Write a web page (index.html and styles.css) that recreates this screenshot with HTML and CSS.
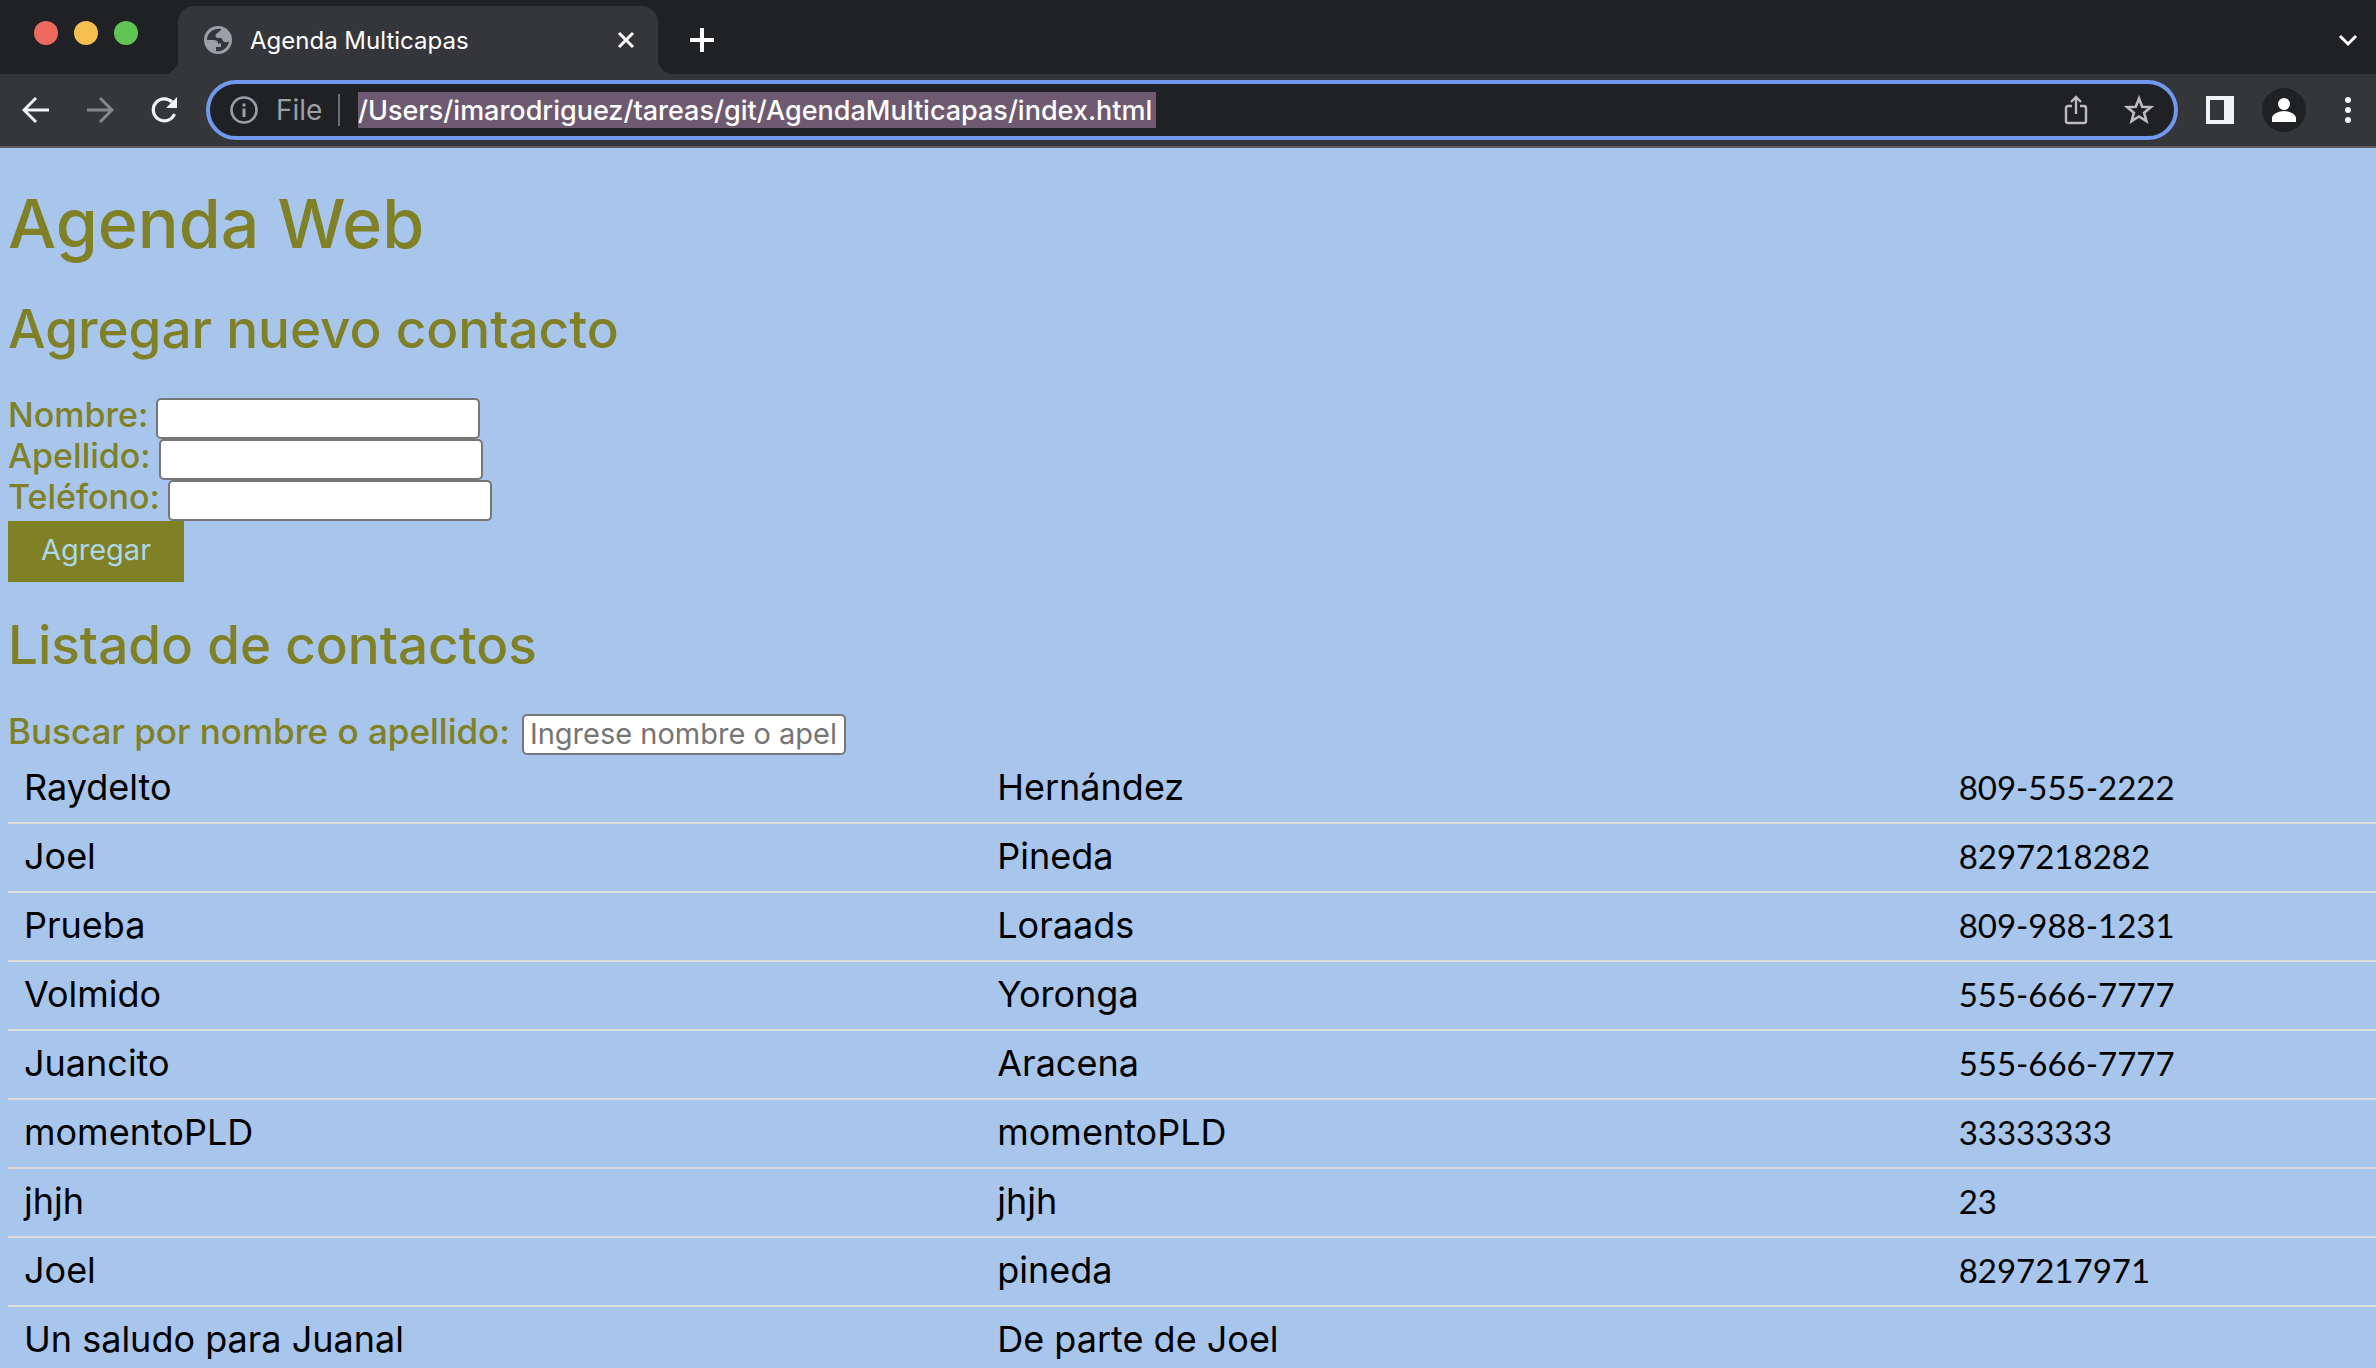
FILE: index.html
```html
<!DOCTYPE html>
<html lang="es">
<head>
<meta charset="utf-8">
<title>Agenda Multicapas</title>
<link rel="stylesheet" href="styles.css">
</head>
<body>
<header class="browser">
  <div class="tabstrip">
    <div class="lights"><span class="light red"></span><span class="light yellow"></span><span class="light green"></span></div>
    <div class="tab">
      <svg class="favicon" viewBox="0 0 28 28" width="28" height="28" aria-hidden="true"><circle cx="14" cy="14" r="14" fill="#9aa0a6"/><path d="M17 3C10 2 3 6.500 3 14h7c2.300 0 4 1.200 4 3.500h3V21h-5v4c6.500 1.200 12-3.500 13-9.500-2 1.300-4.500 1-6-.5-1-1-.5-3-2.500-3-2.500 0-5 0-5-2 0-2.500 2-2.300 2.500-3.500C14.500 5 17 5.500 17 3z" fill="#35363a"/></svg>
      <span class="tab-title">Agenda Multicapas</span>
      <button class="icon" aria-label="Cerrar"><svg viewBox="0 0 18 18" width="18" height="18"><path d="M2 2l14 14M16 2L2 16" stroke="#fff" stroke-width="3" fill="none"/></svg></button>
    </div>
    <button class="icon newtab" aria-label="Nueva pestaña"><svg viewBox="0 0 24 24" width="24" height="24"><path d="M12 1v22M1 12h22" stroke="#fff" stroke-width="4" stroke-linecap="round"/></svg></button>
    <button class="icon tabsearch" aria-label="Buscar pestañas"><svg viewBox="0 0 20 14" width="20" height="14"><path d="M2 3l8 8 8-8" stroke="#fff" stroke-width="3" fill="none"/></svg></button>
  </div>
  <div class="toolbar">
    <nav class="nav">
      <button class="icon" aria-label="Atrás"><svg viewBox="0 0 28 28" width="28" height="28"><path d="M27 14H3M14 2L2 14l12 12" stroke="#f1f3f4" stroke-width="3" fill="none"/></svg></button>
      <button class="icon" aria-label="Adelante"><svg viewBox="0 0 28 28" width="28" height="28"><path d="M1 14h24M14 2l12 12-12 12" stroke="#86878a" stroke-width="3" fill="none"/></svg></button>
      <button class="icon" aria-label="Recargar"><svg viewBox="0 0 28 28" width="28" height="28"><path d="M24.500 18A11 11 0 1 1 22 6" stroke="#f1f3f4" stroke-width="3.200" fill="none"/><path d="M27 1v11H16z" fill="#f1f3f4"/></svg></button>
    </nav>
    <div class="omnibox">
      <svg viewBox="0 0 28 28" width="28" height="28" aria-hidden="true"><circle cx="14" cy="14" r="12.500" fill="none" stroke="#9aa0a6" stroke-width="2.600"/><path d="M14 12.500V21M14 7.500v3" stroke="#9aa0a6" stroke-width="3"/></svg>
      <label class="scheme" for="url">File</label>
      <span class="divider"></span>
      <input class="url" id="url" type="text" value="/Users/imarodriguez/tareas/git/AgendaMulticapas/index.html">
      <div class="omni-actions">
        <button class="icon" aria-label="Compartir"><svg viewBox="0 0 24 30" width="24" height="30"><path d="M8 11H4q-2 0-2 2v13q0 2 2 2h16q2 0 2-2V13q0-2-2-2h-4M12 19V3M7 7l5-5 5 5" fill="none" stroke="#bdbdbe" stroke-width="2.400"/></svg></button>
        <button class="icon" aria-label="Marcador"><svg viewBox="0 0 30 30" width="30" height="30"><path d="M15 3.500l3.200 8.200 8.700.5-6.800 5.500 2.300 8.500L15 21.500l-7.400 4.700 2.300-8.500-6.800-5.500 8.700-.5z" fill="none" stroke="#bdbdbe" stroke-width="2.600"/></svg></button>
      </div>
    </div>
    <button class="icon panel" aria-label="Panel lateral"><svg viewBox="0 0 28 28" width="28" height="28"><path d="M0 0h28v28H0zM4 4v20h14V4z" fill="#f1f3f4" fill-rule="evenodd"/></svg></button>
    <button class="icon avatar" aria-label="Perfil"><svg viewBox="0 0 44 44" width="44" height="44"><circle cx="22" cy="22" r="22" fill="#202124"/><circle cx="22" cy="16" r="6" fill="#fff"/><path d="M10 34v-4c0-4 7-7 12-7s12 3 12 7v4z" fill="#fff"/></svg></button>
    <button class="icon menu" aria-label="Menú"><svg viewBox="0 0 8 28" width="8" height="28"><g fill="#f1f3f4"><circle cx="4" cy="4" r="3"/><circle cx="4" cy="14" r="3"/><circle cx="4" cy="24" r="3"/></g></svg></button>
  </div>
</header>
<main class="page">
  <h1>Agenda Web</h1>
  <h2>Agregar nuevo contacto</h2>
  <form class="form">
    <div class="field"><label for="nombre">Nombre:</label><input id="nombre" type="text"></div>
    <div class="field"><label for="apellido">Apellido:</label><input id="apellido" type="text"></div>
    <div class="field"><label for="telefono">Teléfono:</label><input id="telefono" type="text"></div>
    <button class="add" type="button">Agregar</button>
  </form>
  <h2>Listado de contactos</h2>
  <div class="field search"><label for="buscar">Buscar por nombre o apellido:</label><input id="buscar" type="text" placeholder="Ingrese nombre o apellido"></div>
  <table class="contacts">
    <tbody>
      <tr><td>Raydelto</td><td>Hernández</td><td>809-555-2222</td></tr>
      <tr><td>Joel</td><td>Pineda</td><td>8297218282</td></tr>
      <tr><td>Prueba</td><td>Loraads</td><td>809-988-1231</td></tr>
      <tr><td>Volmido</td><td>Yoronga</td><td>555-666-7777</td></tr>
      <tr><td>Juancito</td><td>Aracena</td><td>555-666-7777</td></tr>
      <tr><td>momentoPLD</td><td>momentoPLD</td><td>33333333</td></tr>
      <tr><td>jhjh</td><td>jhjh</td><td>23</td></tr>
      <tr><td>Joel</td><td>pineda</td><td>8297217971</td></tr>
      <tr><td>Un saludo para Juanal</td><td>De parte de Joel</td><td></td></tr>
    </tbody>
  </table>
</main>
</body>
</html>
```
FILE: styles.css
```css
* { box-sizing: border-box; }
html { overflow: hidden; }
body { margin: 0; min-height: 100vh; background: #a8c5eb; font-family: Inter, "Liberation Sans", sans-serif; }
button, input { font-family: inherit; margin: 0; }
svg { display: block; flex: none; }
.icon { border: 0; padding: 0; background: none; flex: none; }

.browser { color: #fff; border-bottom: 2px solid #5d5d63; }
.tabstrip { display: flex; height: 74px; background: #202124; padding-right: 18px; }
.lights { display: flex; gap: 16px; padding: 21px 52px 0 34px; width: 178px; flex: none; }
.light { width: 24px; height: 24px; border-radius: 50%; flex: none; }
.red { background: #ed6a5e; }
.yellow { background: #f5bf4f; }
.green { background: #61c554; }
.tab { position: relative; display: flex; align-items: center; width: 480px; margin-top: 6px; padding: 0 23px 0 26px; background: #35363a; border-radius: 16px 16px 0 0; }
.tab::before, .tab::after { content: ""; position: absolute; bottom: 0; width: 16px; height: 16px; }
.tab::before { right: 100%; background: radial-gradient(circle at 0 0, #202124 16px, #35363a 17px); }
.tab::after { left: 100%; background: radial-gradient(circle at 100% 0, #202124 16px, #35363a 17px); }
.tab-title { flex: 1; margin-left: 18px; font-size: 24px; }
.newtab { margin: 6px 0 0 32px; }
.tabsearch { margin: 6px 0 0 auto; }

.toolbar { display: flex; align-items: center; height: 72px; background: #35363a; padding-right: 24px; }
.nav { display: flex; gap: 36px; padding: 0 28px 0 22px; }
.omnibox { flex: 1; display: flex; align-items: center; height: 60px; padding: 0 20px; border: 4px solid #7099ee; border-radius: 30px; background: #202124; }
.scheme { margin-left: 18px; font-size: 28px; color: #9aa0a6; width: 62px; }
.divider { width: 2px; height: 32px; background: #6b6e72; margin-right: 18px; }
.url { width: 798px; height: 36px; padding: 0; border: 0; background: #6e5a70; color: #fff; font-size: 27px; font-weight: 500; outline: 0; }
.omni-actions { display: flex; align-items: center; gap: 36px; margin-left: auto; }
.panel { margin-left: 28px; }
.avatar { margin-left: 28px; }
.menu { margin-left: 38px; }

.page { padding-left: 8px; color: #808026; }
h1, h2 { margin: 0; font-weight: 500; }
h1 { padding-top: 39px; font-size: 68px; line-height: 72px; }
h2 { padding: 42px 0 41px; font-size: 53px; line-height: 56px; }
.field { display: flex; align-items: flex-start; gap: 8px; height: 41px; }
.field label { font-size: 34px; font-weight: 500; line-height: 34px; }
.field input { width: 324px; height: 41px; padding: 0 6px 2px; border: 2px solid #767676; border-radius: 5px; background: #fff; font-size: 29px; }
.field input::placeholder { color: #757575; }
.search { gap: 12px; }
.search label { font-size: 35px; }
.add { display: block; width: 176px; height: 61px; padding: 0 0 4px; border: 0; background: #808026; color: #add8e6; font-size: 29px; }
.form + h2 { padding-top: 35px; }
.contacts { width: 100%; table-layout: fixed; border-collapse: separate; border-spacing: 0; color: #000; font-size: 36px; line-height: 44px; }
.contacts td { height: 69px; padding: 10px 16px 13px; border-bottom: 2px solid #ddd; vertical-align: top; }
.contacts td:nth-child(1) { width: 41.1%; }
.contacts td:nth-child(3) { width: 18.3%; font-family: Lato, "Liberation Sans", sans-serif; font-size: 33px; }
```
